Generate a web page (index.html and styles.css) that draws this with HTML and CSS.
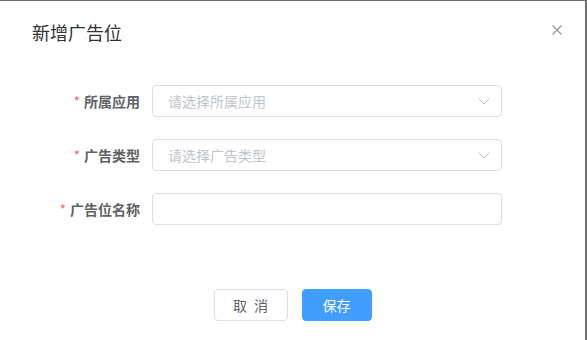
FILE: index.html
```html
<html>
  <head>
    <title>新增广告位</title>
    <link rel="stylesheet" href="styles.css">
  </head>
  <body>
    <div class="dialog">
      <div class="dialog-header">
        <span class="dialog-title">新增广告位</span>
        <button class="dialog-close" aria-label="关闭">
          <svg width="10" height="10" viewBox="0 0 10 10"><path d="M0.5 0.5 L9.5 9.5 M9.5 0.5 L0.5 9.5" stroke="#909399" stroke-width="1.1" fill="none"/></svg>
        </button>
      </div>

      <div class="dialog-body">
        <div class="form-item">
          <label class="form-label required">所属应用</label>
          <div class="select">
            <span class="placeholder">请选择所属应用</span>
            <svg class="arrow" width="12" height="7" viewBox="0 0 12 7"><path d="M0.5 0.5 L6 6 L11.5 0.5" stroke="#c0c4cc" stroke-width="1" fill="none"/></svg>
          </div>
        </div>

        <div class="form-item">
          <label class="form-label required">广告类型</label>
          <div class="select">
            <span class="placeholder">请选择广告类型</span>
            <svg class="arrow" width="12" height="7" viewBox="0 0 12 7"><path d="M0.5 0.5 L6 6 L11.5 0.5" stroke="#c0c4cc" stroke-width="1" fill="none"/></svg>
          </div>
        </div>

        <div class="form-item">
          <label class="form-label required">广告位名称</label>
          <input class="input" type="text">
        </div>
      </div>

      <div class="dialog-footer">
        <button class="btn cancel">取 消</button>
        <button class="btn primary">保存</button>
      </div>
    </div>
  </body>
</html>
```

FILE: styles.css
```css
body {
    margin: 0;
    background: #707070;
    font-family: "Noto Sans CJK SC", "Liberation Sans", sans-serif;
}
.dialog {
    width: 585px;
    height: 339px;
    margin-top: 1px;
    background: #fff;
}
.dialog-header {
    display: flex;
    justify-content: space-between;
    align-items: flex-start;
    padding: 19px 23px 10px 32px;
    height: 24px;
}
.dialog-title {
    font-size: 18px;
    line-height: 24px;
    color: #303133;
}
.dialog-close {
    border: none;
    background: none;
    padding: 0;
    width: 10px;
    height: 10px;
    display: flex;
    margin-top: 5px;
}
.dialog-body {
    padding: 31px 0 0 0;
}
.form-item {
    display: flex;
    align-items: center;
    margin-bottom: 22px;
}
.form-label {
    width: 152px;
    padding-right: 12px;
    box-sizing: border-box;
    text-align: right;
    font-size: 14px;
    font-weight: bold;
    color: #606266;
    line-height: 32px;
}
.required:before {
    content: "*";
    color: #f56c6c;
    margin-right: 4px;
    font-weight: normal;
}
.select, .input {
    width: 350px;
    height: 32px;
    box-sizing: border-box;
    border: 1px solid #dcdfe6;
    border-radius: 4px;
    background: #fff;
}
.select {
    display: flex;
    align-items: center;
    justify-content: space-between;
    padding: 0 11px 0 15px;
}
.placeholder {
    font-size: 14px;
    color: #c0c4cc;
}
.input {
    padding: 0 15px;
    font-size: 14px;
    outline: none;
}
.dialog-footer {
    display: flex;
    justify-content: center;
    gap: 14px;
    padding-top: 42px;
}
.btn {
    height: 32px;
    width: 70px;
    padding: 0;
    font-family: inherit;
    font-size: 14px;
    line-height: 1;
    border: 1px solid #dcdfe6;
    border-radius: 4px;
    background: #fff;
    color: #606266;
}
.btn.cancel {
    width: 74px;
    word-spacing: 4px;
}
.btn.primary {
    background: #409eff;
    border-color: #409eff;
    color: #fff;
}
```
